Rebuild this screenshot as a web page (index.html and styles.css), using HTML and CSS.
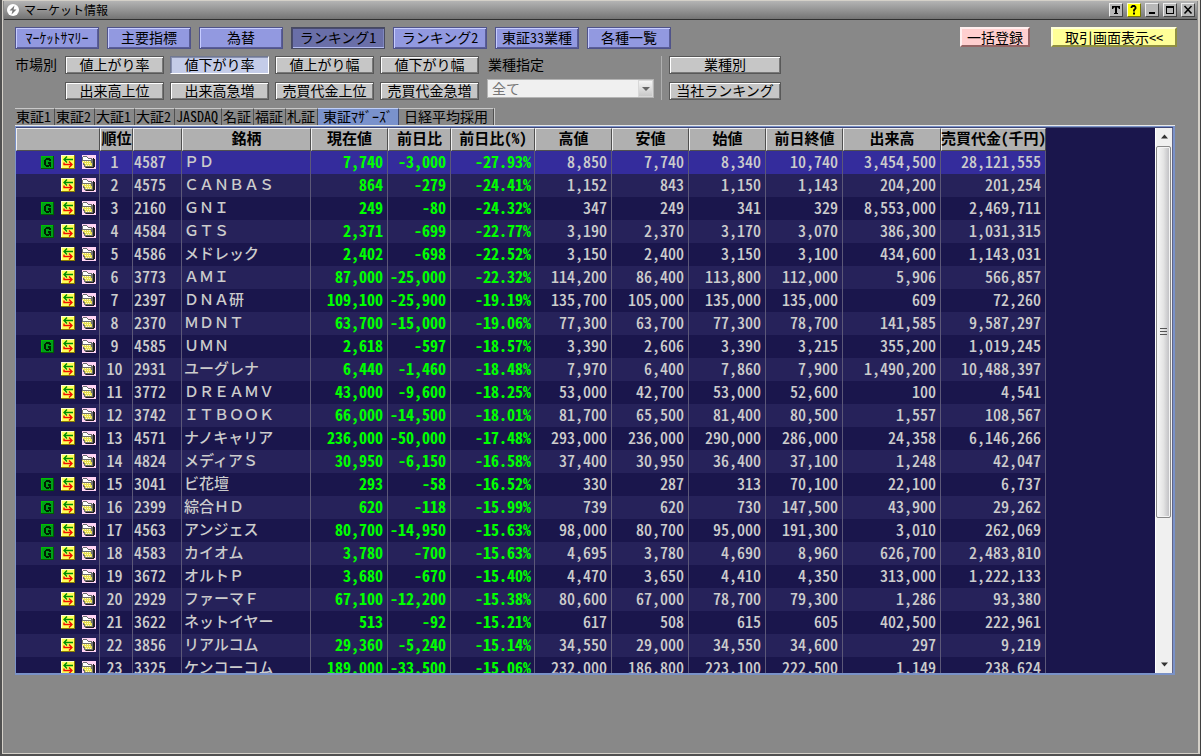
FILE: index.html
```html
<!DOCTYPE html>
<html lang="ja">
<head>
<meta charset="utf-8">
<title>マーケット情報</title>
<link rel="stylesheet" href="styles.css">
</head>
<body>
<svg class="sprites" aria-hidden="true">
  <symbol id="i-chart" viewBox="0 0 13 13">
    <rect width="13" height="13" fill="#005c00"/>
    <path d="M0 0h12v1H1v11H0z" fill="#00c000"/>
    <rect x="1" y="1" width="11" height="11" fill="#00a018"/>
    <path d="M5 2h4v1h1v2H8V4H5v5h3V8H7V6h3v5H9v-1H8v1H5v-1H4V9H3V4h1V3h1z" fill="#002000"/>
  </symbol>
  <symbol id="i-trade" viewBox="0 0 14 14">
    <rect width="14" height="14" fill="#8c7c00"/>
    <rect width="13" height="13" fill="#ffffd0"/>
    <rect x="1" y="1" width="12" height="12" fill="#ffff58"/>
    <path d="M12 4.500H3M6 1.500l-3 3 3 3" fill="none" stroke="#009000" stroke-width="1.400"/>
    <path d="M3 7.500v2h8M8 6.500l3 3-3 3" fill="none" stroke="#f01000" stroke-width="1.400"/>
  </symbol>
  <symbol id="i-folder" viewBox="0 0 14 14">
    <rect width="14" height="14" fill="#ffd4f4"/>
    <path d="M0 2h1V1h4v1h1v1h4v1h1v1h1v7h-1v1H3v-1H2v-2H1V7H0z" fill="#707070"/>
    <path d="M1 3V2h4v1h1v1h3v1H1z" fill="#fff"/>
    <path d="M11 3h1v1h1v8h-1v1H4v-1h7z" fill="#222"/>
    <path d="M0 6h9v2h1v3H3V9H2V8H1V7H0z" fill="#e8e050"/>
    <path d="M1 6.500h8M3 8.500h6M4 10.500h6" stroke="#fffcc0" stroke-dasharray="1 1"/>
  </symbol>
</svg>

<main class="window">
  <header class="titlebar">
    <svg class="logo" viewBox="0 0 12 12" aria-hidden="true"><circle cx="6" cy="6" r="6" fill="#fff"/><path d="M7.500 1.500L2.500 6.500h3L4.500 10.500l5-5h-3z" fill="#777"/></svg>
    <h1>マーケット情報</h1>
    <div class="winbtns">
      <button type="button" aria-label="文字"><svg viewBox="0 0 14 14"><path d="M3 3h8v3h-1L9 4.500H8V10h1v1H5v-1h1V4.500H5L4 6H3z" fill="#000"/></svg></button>
      <button type="button" class="help" aria-label="ヘルプ"><svg viewBox="0 0 14 14"><path d="M4.500 5V4l1-1h2l1 1v1.500L7 7v1.500M6 10.500h2" fill="none" stroke="#000" stroke-width="1.800"/></svg></button>
      <button type="button" aria-label="最小化"><svg viewBox="0 0 14 14"><path d="M4 9h6v2H4z" fill="#000"/></svg></button>
      <button type="button" aria-label="最大化"><svg viewBox="0 0 14 14"><path d="M3 3h8v8H3zM4 5v5h6V5z" fill="#000" fill-rule="evenodd"/></svg></button>
      <button type="button" aria-label="閉じる"><svg viewBox="0 0 14 14"><path d="M3.500 3l7 7.500M10.500 3l-7 7.500" stroke="#000" stroke-width="1.600"/></svg></button>
    </div>
  </header>

  <div class="content">
    <div class="topbar">
      <nav class="menu">
        <button type="button">ﾏｰｹｯﾄｻﾏﾘｰ</button>
        <button type="button">主要指標</button>
        <button type="button">為替</button>
        <button type="button" class="wide current">ランキング1</button>
        <button type="button" class="wide">ランキング2</button>
        <button type="button">東証33業種</button>
        <button type="button">各種一覧</button>
      </nav>
      <div class="actions">
        <button type="button" class="bulk">一括登録</button>
        <button type="button" class="show">取引画面表示&lt;&lt;</button>
      </div>
    </div>

    <div class="filters">
      <span class="caption">市場別</span>
      <div class="types">
        <button type="button">値上がり率</button>
        <button type="button" class="current">値下がり率</button>
        <button type="button">値上がり幅</button>
        <button type="button">値下がり幅</button>
        <button type="button">出来高上位</button>
        <button type="button">出来高急増</button>
        <button type="button">売買代金上位</button>
        <button type="button">売買代金急増</button>
      </div>
      <div class="sector">
        <label for="sector">業種指定</label>
        <div class="selectbox">
          <select id="sector" disabled><option>全て</option></select>
          <span class="drop"><svg viewBox="0 0 8 4" aria-hidden="true"><path d="M0 0h8L4 4z" fill="#666"/></svg></span>
        </div>
      </div>
      <div class="others">
        <button type="button">業種別</button>
        <button type="button">当社ランキング</button>
      </div>
    </div>

    <div class="tabs" role="tablist">
      <button type="button" role="tab">東証1</button>
      <button type="button" role="tab">東証2</button>
      <button type="button" role="tab">大証1</button>
      <button type="button" role="tab">大証2</button>
      <button type="button" role="tab">JASDAQ</button>
      <button type="button" role="tab" class="tight">名証</button>
      <button type="button" role="tab" class="tight">福証</button>
      <button type="button" role="tab" class="tight">札証</button>
      <button type="button" role="tab" class="roomy current" aria-selected="true">東証ﾏｻﾞｰｽﾞ</button>
      <button type="button" role="tab" class="roomy">日経平均採用</button>
    </div>

    <section class="panel">
      <div class="viewport">
        <table>
          <colgroup>
            <col class="c-tools"><col class="c-rank"><col class="c-code"><col class="c-name">
            <col class="c-price"><col class="c-diff"><col class="c-rate">
            <col class="c-price"><col class="c-price"><col class="c-price"><col class="c-price">
            <col class="c-volume"><col class="c-value">
          </colgroup>
          <thead>
            <tr>
              <th></th><th><span>順位</span></th><th></th><th><span>銘柄</span></th>
              <th><span>現在値</span></th><th><span>前日比</span></th><th><span>前日比(%)</span></th>
              <th><span>高値</span></th><th><span>安値</span></th><th><span>始値</span></th><th><span>前日終値</span></th>
              <th><span>出来高</span></th><th><span>売買代金(千円)</span></th>
            </tr>
          </thead>
          <tbody id="rows"></tbody>
        </table>
      </div>
      <div class="scroll" aria-hidden="true">
        <svg class="arrow" viewBox="0 0 17 17"><path d="M5 10h7L8.500 6z" fill="#333"/></svg>
        <div class="track"><div class="thumb"><i></i><i></i><i></i></div></div>
        <svg class="arrow" viewBox="0 0 17 17"><path d="M5 7h7l-3.500 4z" fill="#333"/></svg>
      </div>
    </section>
  </div>
</main>
<script src="app.js"></script>
</body>
</html>
```
FILE: styles.css
```css
* { box-sizing: border-box; }

body {
  margin: 0;
  height: 100vh;
  background: #484848;
  color: #000;
  font: 14px/16px "Noto Sans CJK JP", sans-serif;
  font-feature-settings: "hwid";
}

button, select { font: inherit; color: inherit; font-feature-settings: inherit; }
button { padding: 0 0 2px; white-space: nowrap; }
.sprites { position: absolute; width: 0; height: 0; }

.window {
  display: flex;
  flex-direction: column;
  height: 100%;
  padding: 1px 4px 4px;
  background: #888;
  box-shadow: inset 2px 0 #505050, inset -1px 0 #404040, inset 0 -2px #505050, inset 3px 1px #d4d0c8, inset -3px -3px #d4d0c8;
}

.titlebar {
  display: flex;
  flex: none;
  align-items: center;
  height: 19px;
  padding: 0 2px 0 3px;
  background: linear-gradient(#b4b4b4, #747474);
  border-bottom: 1px solid #303030;
}
.logo { width: 12px; height: 12px; margin-right: 5px; }
h1 { flex: 1; margin: 0; font-size: 12px; font-weight: 400; line-height: 16px; }
.winbtns { display: flex; gap: 4px; }
.winbtns button {
  width: 14px;
  height: 14px;
  padding: 0;
  background: #b8b8b8;
  border: 1px solid;
  border-color: #eee #444 #444 #eee;
}
.winbtns svg { display: block; width: 14px; height: 14px; margin: -1px; }
.winbtns .help { background: #ff0; border-color: #ffc #770 #770 #ffc; }

.content {
  display: flex;
  flex: 1;
  flex-direction: column;
  min-height: 0;
  padding: 7px 22px 77px 11px;
}

.topbar { display: flex; justify-content: space-between; margin-bottom: 7px; }
.menu { display: flex; gap: 8px; }
.menu button {
  width: 84px;
  height: 22px;
  background: #9299e0;
  border: 1px solid #50538a;
  box-shadow: inset 1px 1px #c6ccff, inset -1px -1px #5a5e98;
}
.menu .wide { width: 94px; }
.menu .current {
  background: #6a6fa8;
  border-color: #484a60;
  box-shadow: inset 1px 1px #484a6e, inset 0 -1px #b4bcf0, inset -1px 0 #8088c0;
}
.actions { display: flex; gap: 21px; margin-right: -2px; }
.actions button { height: 20px; border: 2px solid; }
.actions .bulk { width: 70px; background: #ffcfcf; border-color: #ffefef #946464 #946464 #ffefef; }
.actions .show { width: 126px; background: #ffff98; border-color: #ffffd8 #909040 #909040 #ffffd8; }

.filters { display: flex; height: 44px; margin-bottom: 8px; }
.caption { width: 50px; }
.types { display: grid; grid-template-columns: repeat(4, 99px); grid-auto-rows: 18px; gap: 8px 6px; }
.types button, .others button {
  line-height: 14px;
  background: #c6c6c6;
  border: 1px solid #585858;
  box-shadow: inset 1px 1px #fff, inset -1px -1px #787878;
}
.types .current {
  background: #c4cce8;
  border-color: #707890 #fff #fff #707890;
  box-shadow: inset 1px 1px #8890b0;
}
.sector { display: flex; flex-direction: column; gap: 7px; margin-left: 8px; width: 167px; }
.sector label { padding-left: 1px; }
.selectbox { position: relative; }
select {
  display: block;
  width: 100%;
  height: 19px;
  padding: 0 4px 2px;
  appearance: none;
  background: #f0f0f0;
  border: 1px solid #b4b4b4;
  border-radius: 0;
  color: #777;
  opacity: 1;
}
.drop {
  position: absolute;
  top: 1px;
  right: 1px;
  display: flex;
  align-items: center;
  justify-content: center;
  width: 15px;
  height: 17px;
  background: linear-gradient(#f4f4f4, #c8c8c8);
  border: 1px solid #d8d8d8;
  pointer-events: none;
}
.drop svg { width: 8px; height: 4px; }
.others {
  display: grid;
  grid-template-columns: 112px;
  grid-auto-rows: 18px;
  gap: 8px;
  margin-left: 7px;
  padding-left: 7px;
  border-left: 1px solid #b0b0b0;
}

.tabs { display: flex; height: 17px; }
.tabs button {
  padding: 0 3px 2px 1px;
  line-height: 14px;
  background: #888;
  border: 1px solid;
  border-width: 1px 1px 0 0;
  border-color: #c8c8c8 #505050;
  box-shadow: 1px 0 #c8c8c8;
}
.tabs .tight { padding: 0 2px 2px 1px; }
.tabs .roomy { padding: 0 5px 2px; }
.tabs .current { background: #7a92cc; border-color: #c0d0f8 #404c70; }

.panel {
  display: flex;
  flex: 1;
  min-height: 0;
  margin-top: 1px;
  padding: 1px 1px 0 0;
  background: #1a164c;
  border: 1px solid #7a92c8;
  border-width: 1px 2px 2px 1px;
  box-shadow: 0 -1px #e8e8e8, inset 0 1px #404878, inset -1px 0 #606488;
}
.viewport { flex: 1; min-width: 0; overflow: hidden; }

table { width: 1030px; table-layout: fixed; border-collapse: separate; border-spacing: 0; }
.c-tools { width: 84px; }
.c-rank { width: 33px; }
.c-code { width: 49px; }
.c-name { width: 129px; }
.c-price { width: 77px; }
.c-diff { width: 63px; }
.c-rate { width: 84px; }
.c-volume { width: 98px; }
.c-value { width: 105px; }

th, td { height: 23px; white-space: nowrap; line-height: 18px; }
th {
  padding: 0 0 3px;
  background: #b0b0b0;
  border: 1px solid;
  border-color: #f0f0f0 #505050 #505050 #f0f0f0;
  font-size: 15px;
  font-weight: 700;
}
th span { display: flex; justify-content: center; }
td {
  padding: 0 4px 4px;
  border-right: 1px solid #5c5878;
  color: #ccc;
  font-size: 16px;
  font-weight: 500;
  text-align: right;
}
tbody tr:nth-child(even) { background: #26225a; }
tbody tr:first-child { background: #342c9c; }
.tools { padding: 0 3px 1px; }
.tools div { display: flex; justify-content: flex-end; align-items: center; gap: 7px; }
.tools svg { width: 14px; height: 14px; }
.tools .chart { width: 13px; height: 13px; }
.rank { padding: 0 5px 4px 2px; text-align: center; }
.code { padding: 0 1px 4px; text-align: left; }
.name { padding: 0 2px 4px; font-size: 15px; font-feature-settings: normal; text-align: left; }
.down { color: #0f0; font-weight: 700; }
.diff { padding: 0 4px 4px 0; }
.rate { padding-right: 3px; }

.scroll { display: flex; flex-direction: column; width: 17px; background: #f0f0f0; border-left: 1px solid #fff; }
.arrow { flex: none; width: 17px; height: 18px; }
.track { flex: 1; }
.thumb {
  display: flex;
  flex-direction: column;
  align-items: center;
  justify-content: center;
  gap: 2px;
  height: 73%;
  margin: 0 1px 0 0;
  background: linear-gradient(90deg, #f8f8f8, #e4e4e4 50%, #bcbcc0);
  border: 1px solid #888;
  border-radius: 2px;
  box-shadow: inset 0 0 0 1px #f4f4f4;
}
.thumb i { width: 7px; height: 1px; background: #555; }
```
FILE: app.js
```js
// [chart flag, code, name, price, change, change %, high, low, open, previous close, volume, value]
const stocks = [
  [1, "4587", "ＰＤ", "7,740", "-3,000", "-27.93%", "8,850", "7,740", "8,340", "10,740", "3,454,500", "28,121,555"],
  [0, "4575", "ＣＡＮＢＡＳ", "864", "-279", "-24.41%", "1,152", "843", "1,150", "1,143", "204,200", "201,254"],
  [1, "2160", "ＧＮＩ", "249", "-80", "-24.32%", "347", "249", "341", "329", "8,553,000", "2,469,711"],
  [1, "4584", "ＧＴＳ", "2,371", "-699", "-22.77%", "3,190", "2,370", "3,170", "3,070", "386,300", "1,031,315"],
  [0, "4586", "メドレック", "2,402", "-698", "-22.52%", "3,150", "2,400", "3,150", "3,100", "434,600", "1,143,031"],
  [0, "3773", "ＡＭＩ", "87,000", "-25,000", "-22.32%", "114,200", "86,400", "113,800", "112,000", "5,906", "566,857"],
  [0, "2397", "ＤＮＡ研", "109,100", "-25,900", "-19.19%", "135,700", "105,000", "135,000", "135,000", "609", "72,260"],
  [0, "2370", "ＭＤＮＴ", "63,700", "-15,000", "-19.06%", "77,300", "63,700", "77,300", "78,700", "141,585", "9,587,297"],
  [1, "4585", "ＵＭＮ", "2,618", "-597", "-18.57%", "3,390", "2,606", "3,390", "3,215", "355,200", "1,019,245"],
  [0, "2931", "ユーグレナ", "6,440", "-1,460", "-18.48%", "7,970", "6,400", "7,860", "7,900", "1,490,200", "10,488,397"],
  [0, "3772", "ＤＲＥＡＭＶ", "43,000", "-9,600", "-18.25%", "53,000", "42,700", "53,000", "52,600", "100", "4,541"],
  [0, "3742", "ＩＴＢＯＯＫ", "66,000", "-14,500", "-18.01%", "81,700", "65,500", "81,400", "80,500", "1,557", "108,567"],
  [0, "4571", "ナノキャリア", "236,000", "-50,000", "-17.48%", "293,000", "236,000", "290,000", "286,000", "24,358", "6,146,266"],
  [0, "4824", "メディアＳ", "30,950", "-6,150", "-16.58%", "37,400", "30,950", "36,400", "37,100", "1,248", "42,047"],
  [1, "3041", "ビ花壇", "293", "-58", "-16.52%", "330", "287", "313", "70,100", "22,100", "6,737"],
  [1, "2399", "綜合ＨＤ", "620", "-118", "-15.99%", "739", "620", "730", "147,500", "43,900", "29,262"],
  [1, "4563", "アンジェス", "80,700", "-14,950", "-15.63%", "98,000", "80,700", "95,000", "191,300", "3,010", "262,069"],
  [1, "4583", "カイオム", "3,780", "-700", "-15.63%", "4,695", "3,780", "4,690", "8,960", "626,700", "2,483,810"],
  [0, "3672", "オルトＰ", "3,680", "-670", "-15.40%", "4,470", "3,650", "4,410", "4,350", "313,000", "1,222,133"],
  [0, "2929", "ファーマＦ", "67,100", "-12,200", "-15.38%", "80,600", "67,000", "78,700", "79,300", "1,286", "93,380"],
  [0, "3622", "ネットイヤー", "513", "-92", "-15.21%", "617", "508", "615", "605", "402,500", "222,961"],
  [0, "3856", "リアルコム", "29,360", "-5,240", "-15.14%", "34,550", "29,000", "34,550", "34,600", "297", "9,219"],
  [0, "3325", "ケンコーコム", "189,000", "-33,500", "-15.06%", "232,000", "186,800", "223,100", "222,500", "1,149", "238,624"]
];

const icon = (id, cls = "") => `<svg class="${cls}" aria-hidden="true"><use href="#${id}"/></svg>`;

document.getElementById("rows").innerHTML = stocks.map(([chart, code, name, price, diff, rate, ...rest], i) => `
  <tr>
    <td class="tools"><div>${chart ? icon("i-chart", "chart") : ""}${icon("i-trade")}${icon("i-folder")}</div></td>
    <td class="rank">${i + 1}</td>
    <td class="code">${code}</td>
    <td class="name">${name}</td>
    <td class="down">${price}</td>
    <td class="down diff">${diff}</td>
    <td class="down rate">${rate}</td>
    ${rest.map(v => `<td>${v}</td>`).join("")}
  </tr>`).join("");
```
